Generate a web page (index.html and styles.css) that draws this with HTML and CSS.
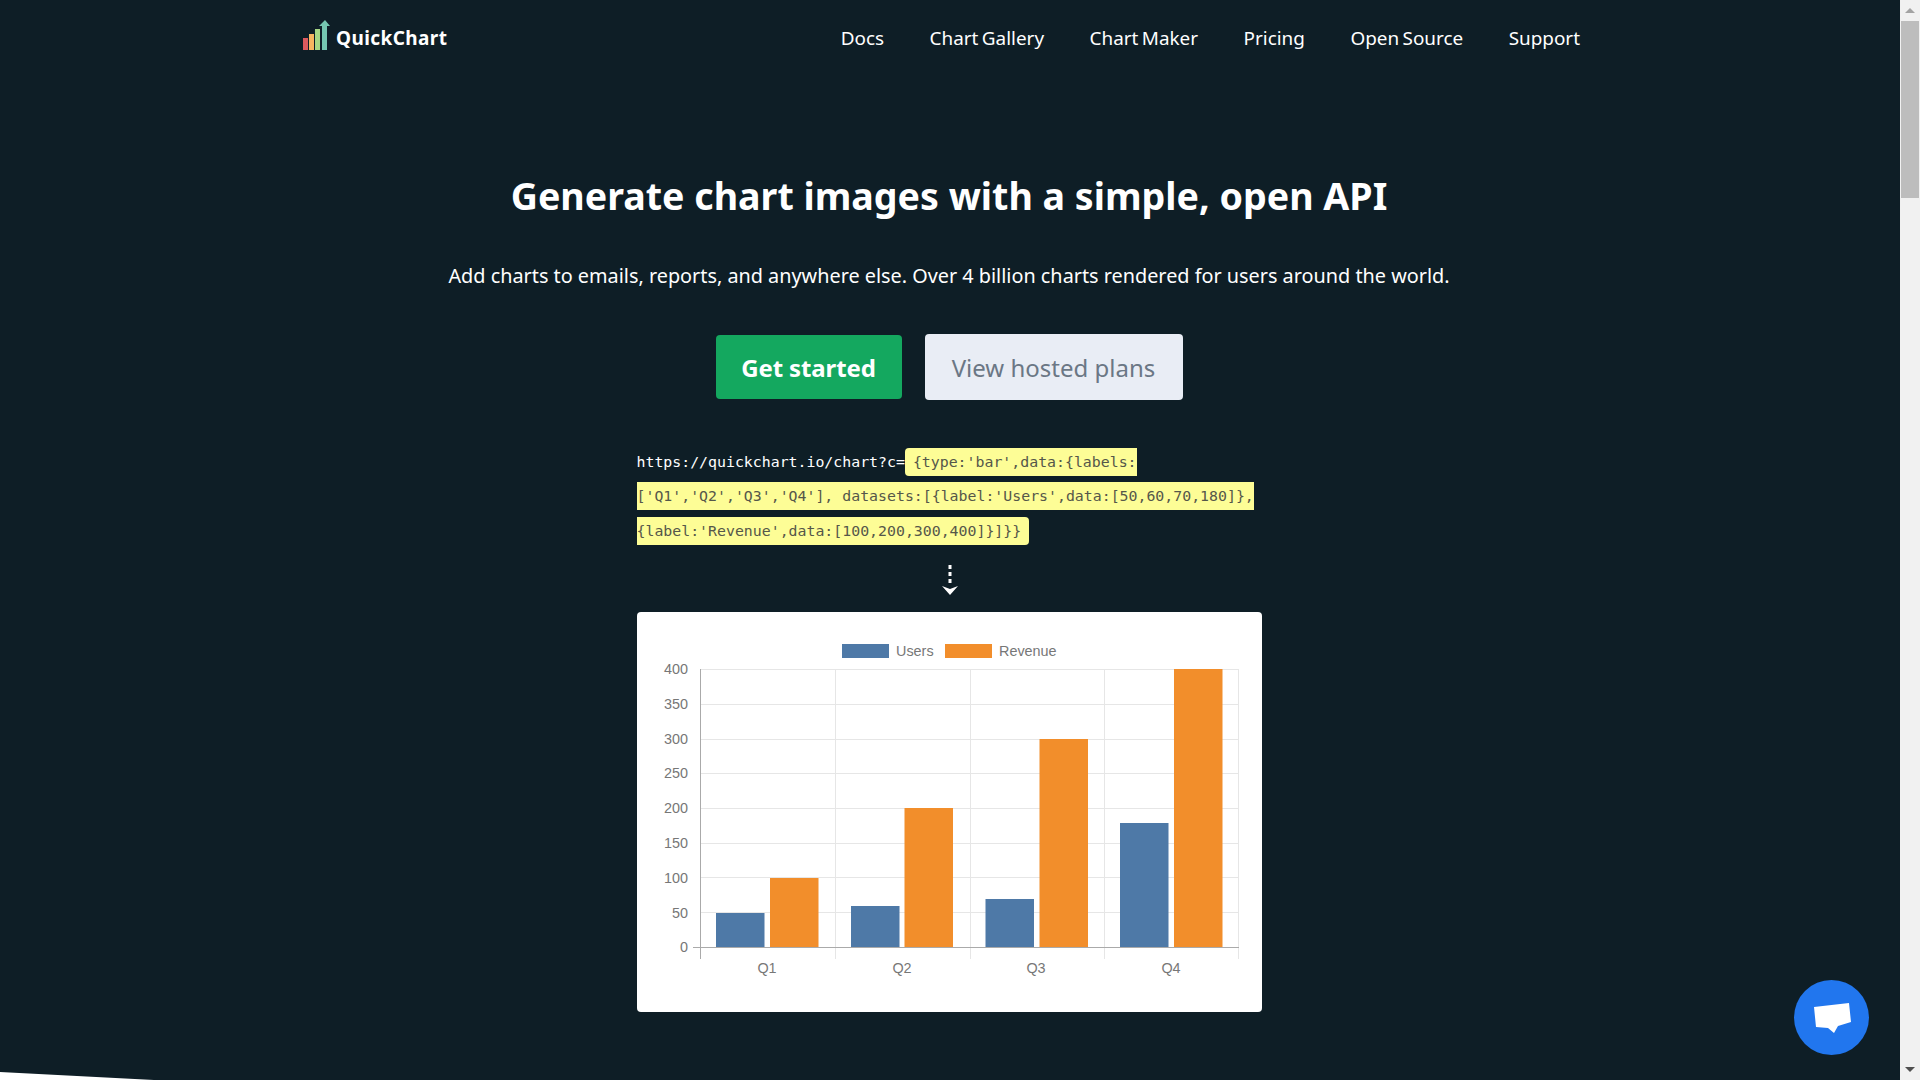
FILE: index.html
```html
<!DOCTYPE html>
<html lang="en">
<head>
  <meta charset="UTF-8" />
  <meta name="viewport" content="width=device-width, initial-scale=1.0" />
  <title>QuickChart</title>
  <link rel="stylesheet" href="styles.css">
</head>
<body>
  <div class="page">
    <header class="topbar">
      <a class="brand" href="#">
        <svg class="brand-logo" width="27" height="32" viewBox="0 0 27 32">
          <rect x="0" y="18" width="5" height="12" fill="#dd5a5e" />
          <rect x="6" y="14" width="5" height="16" fill="#f6b560" />
          <rect x="12" y="9" width="5" height="21" fill="#a6d785" />
          <path d="M19 30V6h-3l6-6 5 6h-3v24z" fill="#74c6b0" />
        </svg>
        <span>QuickChart</span>
      </a>
      <nav class="nav">
        <a href="#">Docs</a>
        <a href="#">Chart Gallery</a>
        <a href="#">Chart Maker</a>
        <a href="#">Pricing</a>
        <a href="#">Open Source</a>
        <a href="#">Support</a>
      </nav>
    </header>

    <main class="hero">
      <h1>Generate chart images with a simple, open API</h1>
      <p class="lead">Add charts to emails, reports, and anywhere else. Over 4 billion charts rendered for users around the world.</p>

      <div class="actions">
        <a class="btn btn-green" href="#">Get started</a>
        <a class="btn btn-light" href="#">View hosted plans</a>
      </div>

      <div class="code-sample">https://quickchart.io/chart?c=<span class="code-hl">{type:'bar',data:{labels:<br>['Q1','Q2','Q3','Q4'], datasets:[{label:'Users',data:[50,60,70,180]},<br>{label:'Revenue',data:[100,200,300,400]}]}}</span></div>

      <svg class="down-arrow" width="16" height="32" viewBox="0 0 16 32">
        <path d="M8 0v19" stroke="#fff" stroke-width="3" stroke-dasharray="4 3" fill="none" />
        <path d="M0 21l8 3 8-3-8 9z" fill="#fff" />
      </svg>

      <div class="chart-card">
        <svg class="chart" width="625" height="400" viewBox="637 612 625 400">
          <g class="grid">
            <path d="M700 669.5H1239M700 704.5H1239M700 739.5H1239M700 773.5H1239M700 808.5H1239M700 843.5H1239M700 877.5H1239M700 912.5H1239" />
            <path d="M835.5 669V959M970.5 669V959M1104.5 669V959M1238.5 669V959" />
          </g>
          <path class="axis" d="M700.5 669V959M693 947.5H1239" />

          <rect class="users" x="842" y="644" width="47" height="14" />
          <text class="legend" x="896" y="655.5">Users</text>
          <rect class="revenue" x="945" y="644" width="47" height="14" />
          <text class="legend" x="999" y="655.5">Revenue</text>

          <g class="users">
            <rect x="716" y="913" width="48.5" height="34" />
            <rect x="851" y="906" width="48.5" height="41" />
            <rect x="985.5" y="899" width="48.5" height="48" />
            <rect x="1120" y="823" width="48.5" height="124" />
          </g>
          <g class="revenue">
            <rect x="770" y="878" width="48.5" height="69" />
            <rect x="904.5" y="808" width="48.5" height="139" />
            <rect x="1039.5" y="739" width="48.5" height="208" />
            <rect x="1174" y="669" width="48.5" height="278" />
          </g>

          <g class="y-labels">
            <text x="688" y="674">400</text>
            <text x="688" y="709">350</text>
            <text x="688" y="744">300</text>
            <text x="688" y="778">250</text>
            <text x="688" y="813">200</text>
            <text x="688" y="848">150</text>
            <text x="688" y="883">100</text>
            <text x="688" y="918">50</text>
            <text x="688" y="952">0</text>
          </g>
          <g class="x-labels">
            <text x="767" y="972.5">Q1</text>
            <text x="902" y="972.5">Q2</text>
            <text x="1036" y="972.5">Q3</text>
            <text x="1171" y="972.5">Q4</text>
          </g>
        </svg>
      </div>

      <div class="hero-edge"></div>

      <a class="chat-btn" href="#">
        <svg width="38" height="32" viewBox="0 0 38 32">
          <path d="M1 5L36 1l2 19-13 4-4 7-6-5-12-1z" fill="#fff" />
        </svg>
      </a>
    </main>
  </div>

  <div class="scrollbar">
    <span class="scroll-up"></span>
    <span class="scroll-thumb"></span>
    <span class="scroll-down"></span>
  </div>
</body>
</html>
```

FILE: styles.css
```css
* {
  box-sizing: border-box;
}

html, body {
  height: 100%;
}

body {
  margin: 0;
  display: flex;
  overflow: hidden;
  font-family: "Noto Sans", sans-serif;
  background: #0e1e26;
  color: #fff;
}

a {
  color: inherit;
  text-decoration: none;
}

.page {
  flex: 1;
  display: flex;
  flex-direction: column;
  min-width: 0;
}

/* top navigation */
.topbar {
  height: 76px;
  flex: none;
  padding: 0 320px 0 303px;
  display: flex;
  justify-content: space-between;
  align-items: center;
}

.brand {
  display: flex;
  align-items: center;
  gap: 6px;
  font-size: 19px;
  font-weight: 700;
  letter-spacing: 0.4px;
}

.brand-logo {
  margin-top: -4px;
}

.nav {
  display: flex;
  gap: 45.5px;
  font-size: 18.9px;
  word-spacing: -1.5px;
}

/* hero */
.hero {
  position: relative;
  flex: 1;
  padding-right: 2px;
  display: flex;
  flex-direction: column;
  align-items: center;
}

h1 {
  margin: 96px 0 0;
  font-size: 37.6px;
  line-height: 48px;
  font-weight: 700;
}

.lead {
  margin: 40px 0 0;
  font-size: 19.83px;
  line-height: 31px;
}

.actions {
  margin-top: 43px;
  display: flex;
  align-items: center;
  gap: 23px;
}

.btn {
  display: flex;
  align-items: center;
  justify-content: center;
  font-size: 24px;
  border-radius: 4px;
}

.btn-green {
  width: 186px;
  height: 64px;
  background: #14a85f;
  font-weight: 700;
  letter-spacing: -0.1px;
}

.btn-light {
  width: 258px;
  height: 66px;
  background: #e9edf5;
  color: #6b7785;
}

.code-sample {
  width: 625px;
  margin-top: 45px;
  font-family: "DejaVu Sans Mono", monospace;
  font-size: 14.87px;
  line-height: 34.3px;
}

.code-hl {
  padding: 5px 8px 5px;
  background: #fdfd96;
  color: #55574a;
  border-radius: 4px;
}

.down-arrow {
  display: block;
  margin: 17px 0 0 2px;
}

.chart-card {
  margin-top: 15px;
  width: 625px;
  height: 400px;
  background: #fff;
  border-radius: 4px;
}

.chart {
  display: block;
  font-family: "Liberation Sans", sans-serif;
  font-size: 14.4px;
}

.chart text {
  fill: #777;
}

.grid path {
  stroke: #e6e6e6;
  stroke-width: 1;
  fill: none;
}

.axis {
  stroke: #aaa;
  stroke-width: 1;
  fill: none;
}

.users {
  fill: #4e79a7;
}

.revenue {
  fill: #f28e2b;
}

.y-labels text {
  text-anchor: end;
}

.x-labels text {
  text-anchor: middle;
}

/* white slope where the next section starts */
.hero-edge {
  position: absolute;
  left: 0;
  bottom: 0;
  width: 154px;
  height: 8px;
  background: #fff;
  clip-path: polygon(0 0, 100% 100%, 0 100%);
}

.chat-btn {
  position: absolute;
  left: 1794px;
  bottom: 25px;
  width: 75px;
  height: 75px;
  border-radius: 50%;
  background: #2176ee;
  display: flex;
  align-items: center;
  justify-content: center;
}

/* window scrollbar */
.scrollbar {
  width: 20px;
  flex: none;
  background: #f1f1f1;
  display: flex;
  flex-direction: column;
  align-items: center;
}

.scroll-up, .scroll-down {
  width: 0;
  height: 0;
  flex: none;
  border-left: 5px solid transparent;
  border-right: 5px solid transparent;
}

.scroll-up {
  margin-top: 8px;
  border-bottom: 5px solid #a3a3a3;
}

.scroll-thumb {
  width: 18px;
  height: 177px;
  margin-top: 8px;
  background: #bdbdbd;
}

.scroll-down {
  margin-top: auto;
  margin-bottom: 8px;
  border-top: 5px solid #505050;
}
```
